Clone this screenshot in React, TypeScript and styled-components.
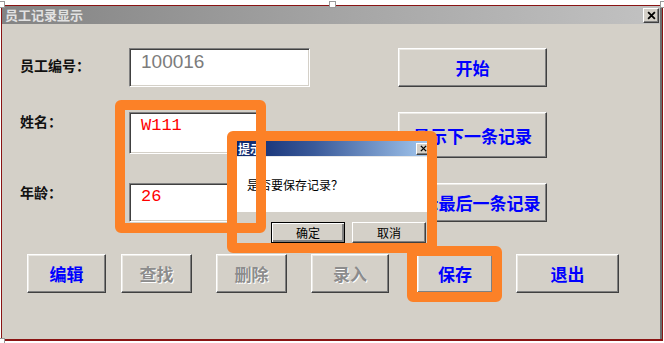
import React from "react";
import styled, { createGlobalStyle } from "styled-components";

const GlobalStyle = createGlobalStyle`
	html, body {
		margin: 0;
		padding: 0;
		background: #ffffff;
	}
	body {
		font-family: "Noto Sans CJK SC", "Liberation Sans", sans-serif;
	}
`;

const Page = styled.div`
	position: relative;
	width: 664px;
	height: 343px;
	overflow: hidden;
`;

const Window = styled.div`
	box-sizing: border-box;
	width: 662px;
	height: 336px;
	margin: 5px 0 0 1px;
	border: 1px solid #8a1414;
	border-bottom-width: 2px;
	padding-right: 2px;
	background: #6e6e6e;
	display: flex;
	flex-direction: column;
`;

const TitleBar = styled.div`
	height: 18px;
	flex-shrink: 0;
	display: flex;
	align-items: center;
	justify-content: space-between;
	padding: 0 1px 0 3px;
	background: linear-gradient(90deg, #838383 0%, #a4a4a4 50%, #c2c2c2 100%);
`;

const TitleText = styled.span`
	font-size: 13px;
	font-weight: 700;
	color: #e2e2e2;
	line-height: 18px;
`;

const RaisedBox = styled.div<{ $w: number; $h: number }>`
	box-sizing: border-box;
	width: ${(p) => p.$w}px;
	height: ${(p) => p.$h}px;
	display: flex;
	align-items: center;
	justify-content: center;
	background: #d4d0c8;
	border: 1px solid;
	border-color: #ffffff #404040 #404040 #ffffff;
	box-shadow: inset -1px -1px 0 #808080;
`;

const Body = styled.div`
	flex: 1;
	background: #d4d0c8;
	padding: 24px 0 0 18px;
	display: flex;
	flex-direction: column;
`;

const FormGrid = styled.div`
	display: grid;
	grid-template-columns: 109px 181px 88px 149px;
	grid-template-rows: 39px 46px 39px;
	row-gap: 25px;
`;

const Label = styled.div<{ $top: number }>`
	grid-column: 1;
	padding-top: ${(p) => p.$top}px;
	font-size: 14px;
	line-height: 16px;
	font-weight: 700;
	color: #111;
`;

const TextBox = styled.div<{ $w: number; $h: number; $color: string; $mono?: boolean }>`
	grid-column: 2;
	box-sizing: border-box;
	width: ${(p) => p.$w}px;
	height: ${(p) => p.$h}px;
	background: #ffffff;
	border: 1px solid;
	border-color: #808080 #ffffff #ffffff #808080;
	box-shadow: inset 1px 1px 0 #404040, inset -1px -1px 0 #d4d0c8;
	padding: 2px 0 0 11px;
	font-family: ${(p) =>
		p.$mono
			? `"Liberation Mono", "Noto Sans CJK SC", monospace`
			: `"Liberation Sans", "Noto Sans CJK SC", sans-serif`};
	font-size: ${(p) => (p.$mono ? 17 : 19)}px;
	line-height: 22px;
	color: ${(p) => p.$color};
`;

const WinButton = styled.button<{ $w: number; $h: number; $off?: boolean; $ml?: number }>`
	box-sizing: border-box;
	width: ${(p) => p.$w}px;
	height: ${(p) => p.$h}px;
	margin-left: ${(p) => p.$ml ?? 0}px;
	padding: 0;
	background: #d4d0c8;
	border: 1px solid;
	border-color: #ffffff #404040 #404040 #ffffff;
	box-shadow: inset -1px -1px 0 #808080, inset 1px 1px 0 #ebe9e4;
	font-family: "Noto Sans CJK SC", sans-serif;
	font-size: 17px;
	font-weight: 700;
	color: ${(p) => (p.$off ? "#8c8c8c" : "#0000ff")};
	text-shadow: ${(p) => (p.$off ? "1px 1px 0 #ffffff" : "none")};
`;

const SideButton = styled(WinButton)`
	grid-column: 4;
	align-self: start;
`;

const BottomBar = styled.div`
	display: flex;
	margin: 32px 0 0 7px;
`;

const Highlight = styled.div<{ $x: number; $y: number; $w: number; $h: number }>`
	position: absolute;
	left: ${(p) => p.$x}px;
	top: ${(p) => p.$y}px;
	width: ${(p) => p.$w}px;
	height: ${(p) => p.$h}px;
	box-sizing: border-box;
	border: 10px solid #fc8127;
	border-radius: 6px;
	z-index: 3;
	pointer-events: none;
`;

const Handle = styled.div<{ $x: number; $y: number }>`
	position: absolute;
	left: ${(p) => p.$x}px;
	top: ${(p) => p.$y}px;
	width: 5px;
	height: 5px;
	background: #ffffff;
	border: 1px solid #9a9a9a;
	z-index: 4;
`;

const Dialog = styled.div`
	position: absolute;
	left: 236px;
	top: 141px;
	width: 196px;
	height: 105px;
	background: #d4d0c8;
	display: flex;
	flex-direction: column;
	z-index: 2;
`;

const DialogTitle = styled.div`
	height: 15px;
	display: flex;
	align-items: center;
	justify-content: space-between;
	padding: 0 2px 0 2px;
	background: linear-gradient(90deg, #0a246a 0%, #3a5a9a 40%, #a6caf0 100%);
	border-bottom: 1px solid #e8e8e8;
`;

const DialogTitleText = styled.span`
	font-size: 12px;
	font-weight: 700;
	color: #ffffff;
	line-height: 15px;
`;

const DialogBody = styled.div`
	height: 55px;
	background: #ffffff;
	display: flex;
	align-items: center;
	padding-left: 11px;
	font-size: 12px;
	color: #000;
`;

const DialogFooter = styled.div`
	display: flex;
	gap: 7px;
	padding: 10px 0 0 35px;
`;

const DialogButton = styled.button<{ $default?: boolean }>`
	box-sizing: border-box;
	width: 74px;
	height: 21px;
	padding: 0;
	background: #d4d0c8;
	border: 1px solid;
	border-color: ${(p) => (p.$default ? "#000" : "#ffffff #404040 #404040 #ffffff")};
	box-shadow: ${(p) =>
		p.$default
			? "inset 1px 1px 0 #ffffff, inset -2px -2px 0 #808080"
			: "inset -1px -1px 0 #808080"};
	font-family: "Noto Sans CJK SC", sans-serif;
	font-size: 12px;
	color: #000;
`;

function CloseGlyph({ size }: { size: number }) {
	return (
		<svg width={size} height={size} viewBox="0 0 8 8">
			<path d="M1 1 L7 7 M7 1 L1 7" stroke="#000" strokeWidth="1.6" />
		</svg>
	);
}

function App() {
	return (
		<Page>
			<GlobalStyle />
			<Window>
				<TitleBar>
					<TitleText>员工记录显示</TitleText>
					<RaisedBox $w={16} $h={15}>
						<CloseGlyph size={9} />
					</RaisedBox>
				</TitleBar>
				<Body>
					<FormGrid>
						<Label $top={9}>员工编号：</Label>
						<TextBox $w={181} $h={39} $color="#7c7c7c">
							100016
						</TextBox>
						<SideButton $w={149} $h={39}>
							开始
						</SideButton>

						<Label $top={1}>姓名：</Label>
						<TextBox $w={129} $h={42} $color="#ff0000" $mono>
							W111
						</TextBox>
						<SideButton $w={149} $h={46}>
							显示下一条记录
						</SideButton>

						<Label $top={1}>年龄：</Label>
						<TextBox $w={129} $h={39} $color="#ff0000" $mono>
							26
						</TextBox>
						<SideButton $w={149} $h={39}>
							显示最后一条记录
						</SideButton>
					</FormGrid>
					<BottomBar>
						<WinButton $w={79} $h={39}>编辑</WinButton>
						<WinButton $w={71} $h={39} $ml={15} $off>查找</WinButton>
						<WinButton $w={71} $h={39} $ml={24} $off>删除</WinButton>
						<WinButton $w={78} $h={39} $ml={24} $off>录入</WinButton>
						<WinButton $w={76} $h={39} $ml={28}>保存</WinButton>
						<WinButton $w={103} $h={39} $ml={23}>退出</WinButton>
					</BottomBar>
				</Body>
			</Window>

			<Dialog>
				<DialogTitle>
					<DialogTitleText>提示</DialogTitleText>
					<RaisedBox $w={14} $h={12}>
						<CloseGlyph size={7} />
					</RaisedBox>
				</DialogTitle>
				<DialogBody>是否要保存记录？</DialogBody>
				<DialogFooter>
					<DialogButton $default>确定</DialogButton>
					<DialogButton>取消</DialogButton>
				</DialogFooter>
			</Dialog>

			<Highlight $x={115} $y={100} $w={151} $h={133} />
			<Highlight $x={227} $y={131} $w={210} $h={122} />
			<Highlight $x={407} $y={246} $w={95} $h={56} />

			<Handle $x={-2} $y={1} />
			<Handle $x={329} $y={1} />
			<Handle $x={660} $y={1} />
			<Handle $x={-2} $y={338} />
		</Page>
	);
}

export default App;
